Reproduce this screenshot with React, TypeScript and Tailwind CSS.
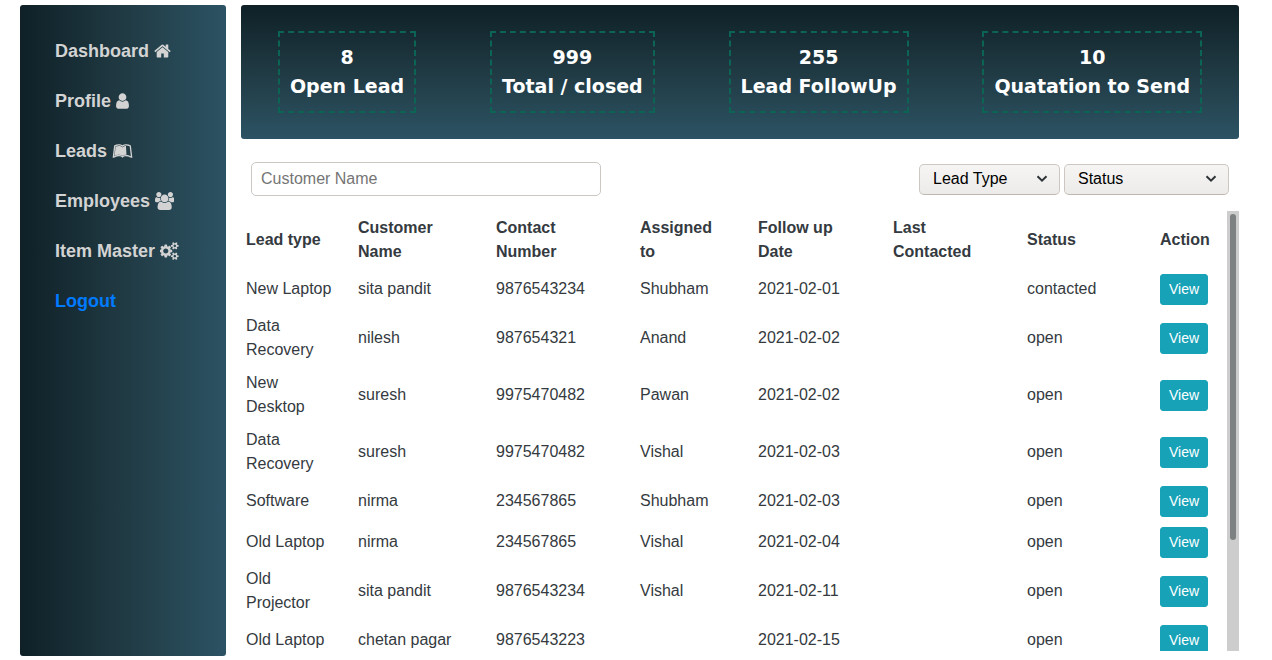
import React, { useState } from "react";
import { FaLeanpub } from "react-icons/fa";

type IconProps = { viewBox: string; path: string; className: string };

function Glyph({ viewBox, path, className }: IconProps) {
  return (
    <svg viewBox={viewBox} className={className} fill="currentColor" aria-hidden="true">
      <path d={path} />
    </svg>
  );
}

const HOME =
  "M1472 992v480q0 26-19 45t-45 19h-384v-384h-256v384h-384q-26 0-45-19t-19-45v-480q0-1 .5-3t.5-3l575-474 575 474q1 2 1 6zm223-69l-62 74q-8 9-21 11h-3q-13 0-21-7l-692-577-692 577q-12 8-24 7-13-2-21-11l-62-74q-8-10-7-23.5t11-21.5l719-599q32-26 76-26t76 26l244 204v-195q0-14 9-23t23-9h192q14 0 23 9t9 23v408l219 182q10 8 11 21.5t-7 23.5z";
const USER =
  "M1536 1399q0 109-62.5 187t-150.5 78h-854q-88 0-150.5-78t-62.5-187q0-85 8.5-160.5t31.5-152 58.5-131 94-89 134.5-34.5q131 128 313 128t313-128q76 0 134.5 34.5t94 89 58.5 131 31.5 152 8.5 160.5zm-256-887q0 159-112.5 271.5t-271.5 112.5-271.5-112.5-112.5-271.5 112.5-271.5 271.5-112.5 271.5 112.5 112.5 271.5z";
const USERS =
  "M529 896q-162 5-265 128h-134q-82 0-138-40.5t-56-118.5q0-353 124-353 6 0 43.5 21t97.5 42.5 119 21.5q67 0 133-23-5 37-5 66 0 139 81 256zm1071 637q0 120-73 189.5t-194 69.5h-874q-121 0-194-69.5t-73-189.5q0-53 3.5-103.5t14-109 26.5-108.5 43-97.5 62-81 85.5-53.5 111.5-20q10 0 43 21.5t73 48 107 48 135 21.5 135-21.5 107-48 73-48 43-21.5q61 0 111.5 20t85.5 53.5 62 81 43 97.5 26.5 108.5 14 109 3.5 103.5zm-1024-1277q0 106-75 181t-181 75-181-75-75-181 75-181 181-75 181 75 75 181zm704 384q0 159-112.5 271.5t-271.5 112.5-271.5-112.5-112.5-271.5 112.5-271.5 271.5-112.5 271.5 112.5 112.5 271.5zm576 225q0 78-56 118.5t-138 40.5h-134q-103-123-265-128 81-117 81-256 0-29-5-66 66 23 133 23 59 0 119-21.5t97.5-42.5 43.5-21q124 0 124 353zm-128-609q0 106-75 181t-181 75-181-75-75-181 75-181 181-75 181 75 75 181z";
const COGS =
  "M832 896q0-106-75-181t-181-75-181 75-75 181 75 181 181 75 181-75 75-181zm768 512q0-52-38-90t-90-38-90 38-38 90q0 53 37.5 90.5t90.5 37.5 90.5-37.5 37.5-90.5zm0-1024q0-52-38-90t-90-38-90 38-38 90q0 53 37.5 90.5t90.5 37.5 90.5-37.5 37.5-90.5zm-384 421v185q0 10-7 19.5t-16 10.5l-155 24q-11 35-32 76 34 48 90 115 7 11 7 20 0 12-7 19-23 30-82.5 89.5t-78.5 59.5q-11 0-21-7l-115-90q-37 19-77 31-11 108-23 155-7 24-30 24h-186q-11 0-20-7.5t-10-17.5l-23-153q-34-10-75-31l-118 89q-7 7-20 7-11 0-21-8-144-133-144-160 0-9 7-19 10-14 41-53t47-61q-23-44-35-82l-152-24q-10-1-17-9.5t-7-19.5v-185q0-10 7-19.5t16-10.5l155-24q11-35 32-76-34-48-90-115-7-11-7-20 0-12 7-20 22-30 82-89t79-59q11 0 21 7l115 90q34-18 77-32 11-108 23-154 7-24 30-24h186q11 0 20 7.5t10 17.5l23 153q34 10 75 31l118-89q8-7 20-7 11 0 21 8 144 133 144 160 0 8-7 19-12 16-42 54t-45 60q23 48 34 82l152 23q10 2 17 10.5t7 19.5zm640 533v140q0 16-149 31-12 27-30 52 51 113 51 138 0 4-4 7-122 71-124 71-8 0-46-47t-52-68q-20 2-30 2t-30-2q-14 21-52 68t-46 47q-2 0-124-71-4-3-4-7 0-25 51-138-18-25-30-52-149-15-149-31v-140q0-16 149-31 13-29 30-52-51-113-51-138 0-4 4-7 4-2 35-20t59-34 30-16q8 0 46 46.5t52 67.5q20-2 30-2t30 2q51-71 92-112l6-2q4 0 124 70 4 3 4 7 0 25-51 138 17 23 30 52 149 15 149 31zm0-1024v140q0 16-149 31-12 27-30 52 51 113 51 138 0 4-4 7-122 71-124 71-8 0-46-47t-52-68q-20 2-30 2t-30-2q-14 21-52 68t-46 47q-2 0-124-71-4-3-4-7 0-25 51-138-18-25-30-52-149-15-149-31v-140q0-16 149-31 13-29 30-52-51-113-51-138 0-4 4-7 4-2 35-20t59-34 30-16q8 0 46 46.5t52 67.5q20-2 30-2t30 2q51-71 92-112l6-2q4 0 124 70 4 3 4 7 0 25-51 138 17 23 30 52 149 15 149 31z";

const iconBase = "inline-block h-[18px] align-[-3px]";

const navItems: { label: string; icon?: React.ReactNode }[] = [
  { label: "Dashboard", icon: <Glyph viewBox="64 0 1664 1792" path={HOME} className="inline-block h-[18px] w-[17px] align-[-3px]" /> },
  { label: "Profile", icon: <Glyph viewBox="256 0 1280 1792" path={USER} className="inline-block h-[18px] w-[13px] align-[-3px]" /> },
  { label: "Leads", icon: <FaLeanpub className="inline-block h-[18px] w-[21px] align-[-3px]" aria-hidden="true" /> },
  { label: "Employees", icon: <Glyph viewBox="-64 0 1920 1792" path={USERS} className={iconBase} /> },
  { label: "Item Master", icon: <Glyph viewBox="0 0 1920 1792" path={COGS} className={iconBase} /> },
  { label: "Logout" },
];

const stats = [
  { value: "8", label: "Open Lead" },
  { value: "999", label: "Total / closed" },
  { value: "255", label: "Lead FollowUp" },
  { value: "10", label: "Quatation to Send" },
];

const columns = [
  { title: "Lead type", width: "w-[112px]" },
  { title: "Customer Name", width: "w-[138px]" },
  { title: "Contact Number", width: "w-[144px]" },
  { title: "Assigned to", width: "w-[118px]" },
  { title: "Follow up Date", width: "w-[135px]" },
  { title: "Last Contacted", width: "w-[134px]" },
  { title: "Status", width: "w-[133px]" },
];

const leads = [
  ["New Laptop", "sita pandit", "9876543234", "Shubham", "2021-02-01", "", "contacted"],
  ["Data Recovery", "nilesh", "987654321", "Anand", "2021-02-02", "", "open"],
  ["New Desktop", "suresh", "9975470482", "Pawan", "2021-02-02", "", "open"],
  ["Data Recovery", "suresh", "9975470482", "Vishal", "2021-02-03", "", "open"],
  ["Software", "nirma", "234567865", "Shubham", "2021-02-03", "", "open"],
  ["Old Laptop", "nirma", "234567865", "Vishal", "2021-02-04", "", "open"],
  ["Old Projector", "sita pandit", "9876543234", "Vishal", "2021-02-11", "", "open"],
  ["Old Laptop", "chetan pagar", "9876543223", "", "2021-02-15", "", "open"],
];

function Sidebar() {
  return (
    <nav className="w-[206px] shrink-0 rounded-[3px] bg-[linear-gradient(to_right,#0f2027,#203a43,#2c5364)] pt-[33px] pl-[35px]">
      <ul className="flex flex-col gap-[23px] text-[18px] leading-[27px] font-bold">
        {navItems.map(({ label, icon }) => (
          <li key={label}>
            <a href="#" className={icon ? "text-[#d3d3d3]" : "text-[#007bff]"}>
              {label} {icon}
            </a>
          </li>
        ))}
      </ul>
    </nav>
  );
}

function Dropdown({ label, options, className }: { label: string; options: string[]; className: string }) {
  return (
    <div className={className}>
      <select
        aria-label={label}
        className="col-start-1 row-start-1 h-[31px] w-full appearance-none rounded-[5px] border border-[#cdc7c2] border-b-[#bfb8b1] bg-linear-to-b from-[#f6f5f4] to-[#edebe9] pr-8 pl-[13px] text-[16px] leading-[24px] text-black"
      >
        <option>{label}</option>
        {options.map((option) => (
          <option key={option}>{option}</option>
        ))}
      </select>
      <svg
        viewBox="0 0 12 8"
        className="pointer-events-none col-start-1 row-start-1 mr-3 h-2 w-3 self-center justify-self-end"
        fill="none"
        stroke="#2e3436"
        strokeWidth="2"
        aria-hidden="true"
      >
        <path d="M1.5 1.2 L6 5.7 L10.5 1.2" />
      </svg>
    </div>
  );
}

export default function App() {
  const [query, setQuery] = useState("");
  const visible = leads.filter((lead) => lead[1].includes(query.toLowerCase()));

  return (
    <div className="flex h-screen gap-[15px] bg-white pt-[5px] pr-[33px] pb-1 pl-5 font-['Liberation_Sans',Arial,sans-serif] text-[16px] leading-[24px] text-[#343a40]">
      <Sidebar />
      <main className="flex min-w-0 flex-1 flex-col pb-[5px]">
        <section className="flex shrink-0 justify-around rounded-[3px] bg-[linear-gradient(#0f2027,#203a43,#2c5364)] py-[26px] text-center font-['DejaVu_Sans',sans-serif] text-[19px] leading-[29px] font-bold text-white">
          {stats.map(({ value, label }) => (
            <div key={label} className="border-2 border-dashed border-[#0b6454] p-[10px]">
              <p>{value}</p>
              <p>{label}</p>
            </div>
          ))}
        </section>

        <form className="mt-[23px] mb-[15px] flex shrink-0 items-baseline px-[10px]">
          <input
            type="text"
            aria-label="Customer Name"
            placeholder="Customer Name"
            value={query}
            onChange={(event) => setQuery(event.target.value)}
            className="mr-auto h-[34px] w-[350px] rounded-[5px] border border-[#cdc7c2] px-[9px] placeholder:text-[#757575]"
          />
          <Dropdown label="Lead Type" options={["New Laptop", "Data Recovery", "Software"]} className="mr-1 grid w-[141px]" />
          <Dropdown label="Status" options={["open", "contacted"]} className="grid w-[165px]" />
        </form>

        <div className="flex min-h-0 flex-1">
          <div className="min-w-0 flex-1 overflow-y-auto [scrollbar-width:none]">
            <table className="w-full table-fixed border-collapse text-left">
              <thead>
                <tr>
                  {columns.map(({ title, width }) => (
                    <th key={title} className={`${width} pt-[5px] pr-7 pb-1 pl-[5px] align-middle font-bold`}>
                      {title}
                    </th>
                  ))}
                  <th className="w-[72px] pt-[5px] pb-1 pl-[5px] align-middle font-bold">Action</th>
                </tr>
              </thead>
              <tbody>
                {visible.map((lead, index) => (
                  <tr key={index} className="h-[41px]">
                    {lead.map((cell, column) => (
                      <td key={column} className="pt-[5px] pr-5 pb-1 pl-[5px] align-middle">
                        {cell}
                      </td>
                    ))}
                    <td className="pt-[5px] pb-1 pl-[5px] align-middle">
                      <button
                        type="button"
                        className="block h-[31px] rounded-[3px] border border-[#17a2b8] bg-[#17a2b8] px-2 text-[14px] leading-[21px] text-white"
                      >
                        View
                      </button>
                    </td>
                  </tr>
                ))}
              </tbody>
            </table>
          </div>
          <div className="w-3 shrink-0 bg-[#cdcdcd] p-[3px]" aria-hidden="true">
            <div className="h-3/4 rounded-full bg-[#7e8181]" />
          </div>
        </div>
      </main>
    </div>
  );
}
